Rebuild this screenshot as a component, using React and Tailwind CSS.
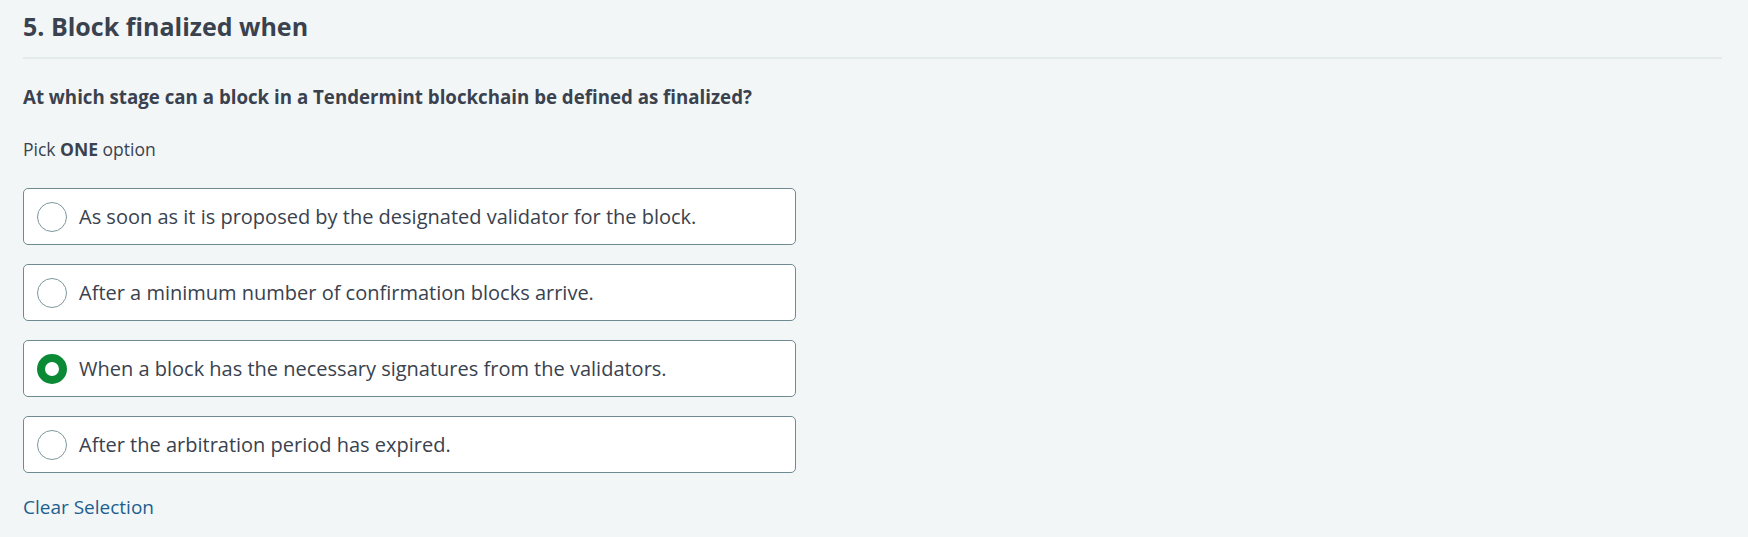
import { useState } from 'react';

const options = [
  'As soon as it is proposed by the designated validator for the block.',
  'After a minimum number of confirmation blocks arrive.',
  'When a block has the necessary signatures from the validators.',
  'After the arbitration period has expired.',
];

function Radio({ checked }) {
  if (checked) {
    return <span className="block w-[30px] h-[30px] rounded-full border-[8px] border-[#0b8a36] bg-white shrink-0" />;
  }
  return <span className="block w-[30px] h-[30px] rounded-full border border-[#7d979c] bg-white shrink-0" />;
}

export default function App() {
  const [selected, setSelected] = useState(2);

  return (
    <div className="w-full min-h-[537px] bg-[#f3f6f7] text-[#39424e] pl-[23px] pr-[26px] pt-2 font-['Open_Sans',sans-serif]">
      <h1 className="text-[25px] leading-[36px] font-bold">5. Block finalized when</h1>
      <div className="mt-[13px] h-[2px] bg-[#e3eaeb]" />

      <p className="mt-[25px] text-[18.7px] leading-[26px] font-bold">
        At which stage can a block in a Tendermint blockchain be defined as finalized?
      </p>

      <p className="mt-[27px] text-[17.5px] leading-[24px]">
        Pick <span className="font-bold">ONE</span> option
      </p>

      <div className="mt-[27px] w-[773px] flex flex-col gap-[19px]">
        {options.map((opt, i) => (
          <button
            key={i}
            onClick={() => setSelected(i)}
            className="h-[57px] flex items-center gap-[12px] pl-[13px] bg-white border border-[#6f8b92] rounded-[5px] text-left"
          >
            <Radio checked={selected === i} />
            <span className="text-[20px] leading-[26px] text-[#39424e]">{opt}</span>
          </button>
        ))}
      </div>

      <button
        onClick={() => setSelected(null)}
        className="mt-[21px] block text-[19px] leading-[26px] text-[#1c5f8f]"
      >
        Clear Selection
      </button>
    </div>
  );
}
